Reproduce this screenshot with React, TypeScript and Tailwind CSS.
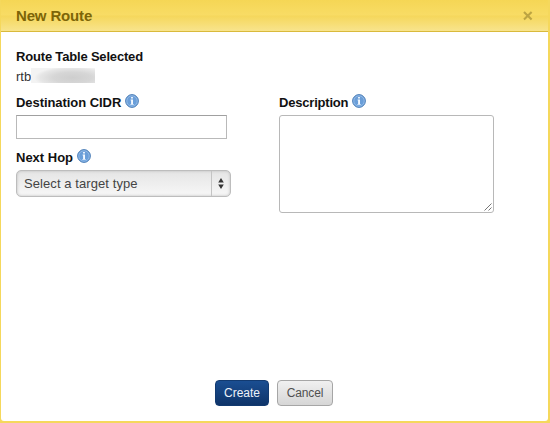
import React from "react";

function InfoIcon() {
  return (
    <svg width="14" height="14" viewBox="0 0 14 14" className="block shrink-0">
      <defs>
        <linearGradient id="infoFill" x1="0" y1="0" x2="0" y2="1">
          <stop offset="0" stopColor="#6c9dd6" />
          <stop offset="1" stopColor="#69a0dc" />
        </linearGradient>
      </defs>
      <circle cx="7" cy="7" r="6.4" fill="url(#infoFill)" stroke="#5081b8" strokeWidth="1" />
      <circle cx="7" cy="7" r="5.2" fill="none" stroke="#98bee8" strokeWidth="0.8" />
      <path d="M6.1 3h1.8v1.5H6.1zM5.6 5.6H8v4.3h.7v.9H5.4v-.9h.7V6.5h-.5z" fill="#f4f9ff" />
    </svg>
  );
}

function FieldLabel({ text, spacing }: { text: string; spacing: string }) {
  return (
    <div className="flex h-4 items-start gap-1">
      <span className={`pt-px text-[13px] leading-4 font-bold whitespace-nowrap text-[#111] ${spacing}`}>{text}</span>
      <InfoIcon />
    </div>
  );
}

export default function App() {
  return (
    <div className="h-[423px] w-[550px] bg-[#f5d85c] pr-[2px] pb-[2px] pl-px font-['Liberation_Sans',Arial,sans-serif]">
      <div className="flex h-[421px] flex-col overflow-hidden rounded-b-[3px] bg-white">
        <header className="flex h-[32px] shrink-0 items-center justify-between border-b border-[#d9ba3c] bg-[linear-gradient(#f5d655_0%,#f8dc65_49%,#f5d75b_51%,#f8e48d_100%)] pr-[15px] pl-[15px]">
          <h1 className="pt-px text-[15px] leading-5 font-bold tracking-[-0.15px] text-[#7d6507]">New Route</h1>
          <svg width="10" height="10" viewBox="0 0 10 10" className="mt-px">
            <path d="M1 1l7.6 7.6M8.6 1L1 8.6" stroke="#bca442" strokeWidth="2.1" />
          </svg>
        </header>

        <main className="flex flex-1 flex-col px-[15px] pt-4">
          <section className="h-[46px]">
            <h2 className="pt-px text-[13px] leading-4 font-bold tracking-[-0.18px] text-[#111]">Route Table Selected</h2>
            <div className="mt-[3px] flex h-4 items-start">
              <span className="w-[15px] pt-px text-[13px] leading-4 text-[#333]">rtb</span>
              <span className="h-[15px] w-[64px] bg-[radial-gradient(ellipse_60%_75%_at_65%_65%,#cecece_0%,#d6d6d6_50%,#e6e6e6_85%,#f3f3f3_100%)]" />
            </div>
          </section>

          <div className="flex">
            <div className="w-[263px]">
              <FieldLabel text="Destination CIDR" spacing="tracking-[-0.06px]" />
              <input className="mt-[5px] block h-[24px] w-[211px] border border-[#b9b9b9] border-t-[#a0a0a0] bg-white px-2 outline-none" />
              <div className="mt-[10px]">
                <FieldLabel text="Next Hop" spacing="tracking-[0px]" />
              </div>
              <button className="mt-[5px] flex h-[27px] w-[215px] items-stretch rounded-[5px] border border-[#bdbdbd] bg-[linear-gradient(#e5e5e5,#f7f7f7)] text-left shadow-[inset_0_0_3px_#bbb]">
                <span className="flex-1 pl-[7px] text-[13px] leading-[25px] tracking-[0.08px] text-[#444]">Select a target type</span>
                <span className="flex w-[19px] items-center justify-center border-l border-[#c4c4c4]">
                  <svg width="6" height="11" viewBox="0 0 6 11">
                    <path d="M3 0l2.8 4.6H.2zM3 11L.2 6.4h5.6z" fill="#333" />
                  </svg>
                </span>
              </button>
            </div>
            <div>
              <FieldLabel text="Description" spacing="tracking-[-0.2px]" />
              <div className="mt-[5px] flex h-[98px] w-[215px] items-end justify-end rounded-[3px] border border-[#b8b8b8] bg-white">
                <svg width="9" height="9" viewBox="0 0 9 9">
                  <path d="M.5 7.5l7-7M4.5 7.5l3-3" stroke="#777" strokeWidth="1" />
                </svg>
              </div>
            </div>
          </div>
        </main>

        <footer className="flex h-[41px] shrink-0 items-start gap-2 pl-[214px]">
          <button className="h-[26px] w-[54px] rounded-[4px] border border-[#123a70] bg-[linear-gradient(#1a4e92,#0e3469)] text-[12px] leading-6 text-[#eef2f8]">Create</button>
          <button className="h-[26px] w-[56px] rounded-[4px] border border-[#a6a6a6] bg-[linear-gradient(#f0f0f0,#d6d6d6)] text-[12px] leading-6 tracking-[-0.15px] text-[#505050]">Cancel</button>
        </footer>
      </div>
    </div>
  );
}
